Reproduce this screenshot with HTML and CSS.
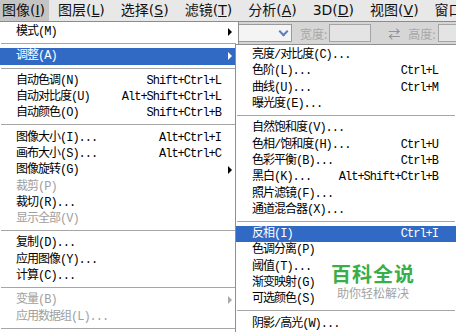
FILE: index.html
```html
<!DOCTYPE html>
<html lang="zh-CN">
<head>
    <meta charset="UTF-8">
    <meta name="viewport" content="width=device-width, initial-scale=1.0">
    <title>图像菜单</title>
    <link rel="stylesheet" href="styles.css">
</head>
<body>
    <div class="app">
        <!-- Menu bar -->
        <nav class="menubar">
            <span class="top-item active">图像(<u>I</u>)</span>
            <span class="top-item">图层(<u>L</u>)</span>
            <span class="top-item">选择(<u>S</u>)</span>
            <span class="top-item">滤镜(<u>T</u>)</span>
            <span class="top-item">分析(<u>A</u>)</span>
            <span class="top-item">3D(<u>D</u>)</span>
            <span class="top-item">视图(<u>V</u>)</span>
            <span class="top-item">窗口(<u>W</u>)</span>
        </nav>

        <!-- Options bar behind the menus -->
        <div class="toolbar">
            <div class="select"><span class="chev"></span></div>
            <span class="opt-label">宽度:</span>
            <span class="opt-box"></span>
            <span class="swap">⇄</span>
            <span class="opt-label">高度:</span>
            <span class="opt-box"></span>
        </div>

        <!-- Image menu -->
        <ul class="menu main-menu">
            <li class="item"><span>模式(M)</span><span></span><span class="arrow"></span></li>
            <li class="sep"></li>
            <li class="item hot"><span>调整(A)</span><span></span><span class="arrow"></span></li>
            <li class="sep"></li>
            <li class="item"><span>自动色调(N)</span><span class="key">Shift+Ctrl+L</span><span></span></li>
            <li class="item"><span>自动对比度(U)</span><span class="key">Alt+Shift+Ctrl+L</span><span></span></li>
            <li class="item"><span>自动颜色(O)</span><span class="key">Shift+Ctrl+B</span><span></span></li>
            <li class="sep"></li>
            <li class="item"><span>图像大小(I)...</span><span class="key">Alt+Ctrl+I</span><span></span></li>
            <li class="item"><span>画布大小(S)...</span><span class="key">Alt+Ctrl+C</span><span></span></li>
            <li class="item"><span>图像旋转(G)</span><span></span><span class="arrow"></span></li>
            <li class="item off"><span>裁剪(P)</span><span></span><span></span></li>
            <li class="item"><span>裁切(R)...</span><span></span><span></span></li>
            <li class="item off"><span>显示全部(V)</span><span></span><span></span></li>
            <li class="sep"></li>
            <li class="item"><span>复制(D)...</span><span></span><span></span></li>
            <li class="item"><span>应用图像(Y)...</span><span></span><span></span></li>
            <li class="item"><span>计算(C)...</span><span></span><span></span></li>
            <li class="sep"></li>
            <li class="item off"><span>变量(B)</span><span></span><span class="arrow"></span></li>
            <li class="item off"><span>应用数据组(L)...</span><span></span><span></span></li>
            <li class="sep"></li>
        </ul>

        <!-- Adjustments submenu -->
        <ul class="menu sub-menu">
            <li class="item"><span>亮度/对比度(C)...</span><span></span><span></span></li>
            <li class="item"><span>色阶(L)...</span><span class="key">Ctrl+L</span><span></span></li>
            <li class="item"><span>曲线(U)...</span><span class="key">Ctrl+M</span><span></span></li>
            <li class="item"><span>曝光度(E)...</span><span></span><span></span></li>
            <li class="sep"></li>
            <li class="item"><span>自然饱和度(V)...</span><span></span><span></span></li>
            <li class="item"><span>色相/饱和度(H)...</span><span class="key">Ctrl+U</span><span></span></li>
            <li class="item"><span>色彩平衡(B)...</span><span class="key">Ctrl+B</span><span></span></li>
            <li class="item"><span>黑白(K)...</span><span class="key">Alt+Shift+Ctrl+B</span><span></span></li>
            <li class="item"><span>照片滤镜(F)...</span><span></span><span></span></li>
            <li class="item"><span>通道混合器(X)...</span><span></span><span></span></li>
            <li class="sep"></li>
            <li class="item hot"><span>反相(I)</span><span class="key">Ctrl+I</span><span></span></li>
            <li class="item"><span>色调分离(P)</span><span></span><span></span></li>
            <li class="item"><span>阈值(T)...</span><span></span><span></span></li>
            <li class="item"><span>渐变映射(G)</span><span></span><span></span></li>
            <li class="item"><span>可选颜色(S)</span><span></span><span></span></li>
            <li class="sep"></li>
            <li class="item"><span>阴影/高光(W)...</span><span></span><span></span></li>
        </ul>

        <!-- Watermark -->
        <div class="watermark">
            <div class="wm-title">百科全说</div>
            <div class="wm-sub">助你轻松解决</div>
        </div>
    </div>
</body>
</html>
```

FILE: styles.css
```css
body {
    margin: 0;
    padding: 0;
    background-color: #ffffff;
    overflow: hidden;
}
.app {
    position: relative;
    width: 456px;
    height: 332px;
    overflow: hidden;
    background-color: #ffffff;
}

/* menu bar */
.menubar {
    display: flex;
    height: 21px;
    background-color: #e8e8e8;
    border-bottom: 1px solid #8c8c8c;
    font-family: "DejaVu Sans", "Noto Sans CJK SC", sans-serif;
    font-size: 14px;
    line-height: 21px;
    color: #111;
}
.top-item {
    flex-shrink: 0;
    padding: 0 7px 0 2px;
    margin-right: 7px;
    white-space: nowrap;
}
.top-item.active {
    background-color: #c4c4c4;
    padding-right: 4px;
    margin-right: 7px;
}

/* options bar */
.toolbar {
    display: flex;
    align-items: center;
    height: 22px;
    padding-left: 200px;
    background-color: #d6d6d6;
    font-family: "Noto Sans CJK SC", sans-serif;
    font-size: 12px;
    color: #a8a8a8;
}
.toolbar > * {
    flex-shrink: 0;
}
.select {
    position: relative;
    width: 90px;
    height: 16px;
    background-color: #f4f4f4;
    border: 1px solid #9a9a9a;
    margin-right: 8px;
}
.chev {
    position: absolute;
    right: 4px;
    top: 3px;
    width: 5px;
    height: 5px;
    border-right: 2px solid #5a7fb8;
    border-bottom: 2px solid #5a7fb8;
    transform: rotate(45deg);
}
.opt-label {
    margin-right: 2px;
}
.opt-box {
    width: 40px;
    height: 16px;
    background-color: #e4e4e4;
    border: 1px solid #a4a4a4;
}
.swap {
    margin: 0 8px 0 17px;
    color: #8a8a8a;
}

/* menus */
.menu {
    position: absolute;
    margin: 0;
    list-style: none;
    background-color: #ffffff;
    font-family: "Liberation Mono", "Noto Sans CJK SC", monospace;
    font-size: 12px;
    letter-spacing: -1px;
    color: #000;
}
.main-menu {
    left: 0;
    top: 22px;
    width: 238px;
    height: 320px;
    padding: 2px 0 0 0;
    border-right: 1px solid #8f8f8f;
}
.sub-menu {
    left: 235px;
    top: 44px;
    width: 221px;
    height: 300px;
    padding: 2px 0 0 0;
    border: 1px solid #8f8f8f;
}
.item {
    display: grid;
    grid-template-columns: 1fr auto 17px;
    align-items: center;
    height: 16.3px;
    line-height: 16px;
    padding-left: 16px;
    white-space: nowrap;
}
.sub-menu .item {
    grid-template-columns: 1fr auto 19px;
    padding-left: 16px;
}
.item.hot {
    background-color: #316ac5;
    color: #ffffff;
}
.item.off {
    color: #a0a0a0;
}
.arrow {
    justify-self: center;
    width: 0;
    height: 0;
    border-top: 4px solid transparent;
    border-bottom: 4px solid transparent;
    border-left: 4px solid #000;
}
.item.hot .arrow {
    border-left-color: #ffffff;
}
.item.off .arrow {
    border-left-color: #a8a8a8;
}
.sep {
    height: 8px;
    position: relative;
}
.sep::after {
    content: "";
    position: absolute;
    left: 1px;
    right: 2px;
    top: 3px;
    border-top: 1px solid #a6a6a6;
}

/* watermark */
.watermark {
    position: absolute;
    left: 331px;
    top: 262px;
    text-align: center;
    font-family: "Noto Sans CJK SC", sans-serif;
}
.wm-title {
    font-size: 20px;
    font-weight: 700;
    line-height: 24px;
    color: #3aae48;
    letter-spacing: 1px;
}
.wm-sub {
    font-size: 12px;
    line-height: 14px;
    color: #a3a3a3;
}
```
